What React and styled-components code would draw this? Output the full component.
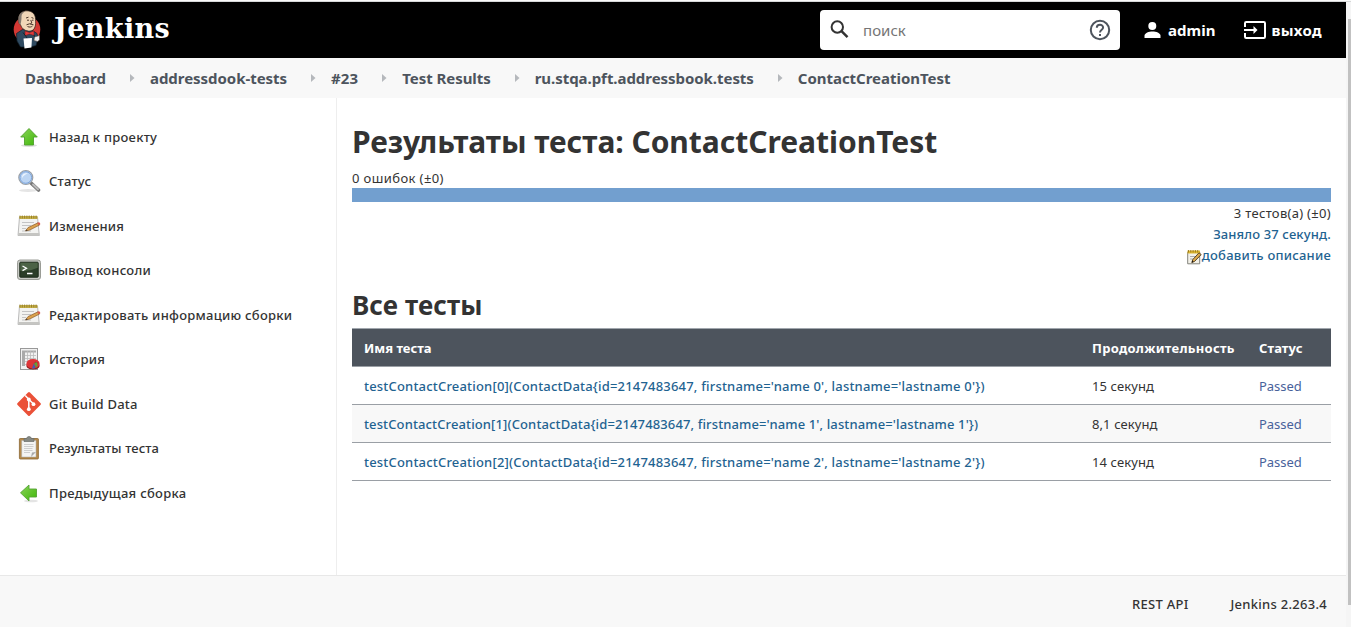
import React from 'react';
import styled, { createGlobalStyle } from 'styled-components';

const GlobalStyle = createGlobalStyle`
  * { box-sizing: border-box; }
  body { margin: 0; background: #fff; overflow: hidden; }
  h1, h2 { margin: 0; }
`;

const Window = styled.div`
  display: flex;
  flex-direction: column;
  height: 627px;
  width: 1351px;
  border-top: 1px solid #fafafa;
  font-family: "Noto Sans", "Open Sans", sans-serif;
  font-size: 13px;
  color: #333;
  white-space: nowrap;
`;
const Viewport = styled.div`
  display: flex;
  flex: 1;
  min-height: 0;
  border-top: 1px solid #d5d7d8;
`;
const Page = styled.div`
  display: flex;
  flex-direction: column;
  width: 1346px;
`;
const ScrollTrack = styled.div`
  width: 5px;
  padding: 17px 0 20px 2px;
  background: #f5f5f5;
`;
const ScrollThumb = styled.div`
  height: 586px;
  background: #c1c1c1;
`;

const Header = styled.header`
  display: flex;
  align-items: center;
  height: 56px;
  padding: 0 24px 0 12px;
  background: #000;
  color: #fff;
`;
const Brand = styled.a`
  display: flex;
  align-items: center;
  gap: 12px;
  flex: 1;
`;
const BrandName = styled.span`
  font: 700 27px/36px "DejaVu Serif", serif;
  letter-spacing: 0.4px;
  margin-top: -3px;
`;
const SearchBox = styled.div`
  display: flex;
  align-items: center;
  width: 300px;
  height: 40px;
  padding: 0 9px;
  border-radius: 4px;
  background: #fff;
  color: #333;
`;
const Placeholder = styled.span`
  flex: 1;
  margin-left: 12px;
  font-size: 15px;
  color: #757575;
`;
const UserLink = styled.a`
  display: flex;
  align-items: center;
  gap: ${(p) => p.$gap}px;
  margin-left: ${(p) => p.$left}px;
  font-size: 15px;
  font-weight: 700;
  letter-spacing: ${(p) => p.$ls || 0}px;
`;

const Breadcrumbs = styled.nav`
  display: flex;
  align-items: center;
  height: 40px;
  padding-left: 25px;
  background: #f8f8f8;
  color: #4d545d;
`;
const Crumb = styled.a`
  font-size: 15px;
  font-weight: 700;
  letter-spacing: ${(p) => p.$ls || 0}px;
`;
const Separator = styled.span`
  display: flex;
  width: 44px;
  padding-left: 24px;
`;

const Body = styled.div`
  display: flex;
  height: 477px;
`;
const Sidebar = styled.aside`
  width: 337px;
  padding: 16.6px 0 0 17px;
  border-right: 1px solid #eee;
`;
const Task = styled.a`
  display: flex;
  align-items: center;
  gap: 8px;
  height: 44.5px;
  font-weight: 500;
  letter-spacing: ${(p) => p.$ls || 0}px;
`;

const Main = styled.main`
  flex: 1;
  padding: 24px 15px 0 15px;
`;
const Title = styled.h1`
  font-size: 30px;
  line-height: 40px;
  letter-spacing: -0.03px;
  margin-bottom: 6px;
`;
const Failures = styled.div`
  line-height: 20px;
  letter-spacing: 0.4px;
`;
const ResultBar = styled.div`
  height: 14px;
  background: #729fcf;
`;
const Summary = styled.div`
  display: flex;
  flex-direction: column;
  align-items: flex-end;
  padding-top: 1px;
  line-height: 21px;
`;
const Count = styled.span`
  letter-spacing: 0.3px;
`;
const Link = styled.a`
  display: flex;
  align-items: center;
  color: #1f6391;
  font-weight: 500;
  letter-spacing: ${(p) => p.$ls || 0}px;
`;
const Subtitle = styled.h2`
  margin: 21px 0 5px;
  font-size: 26px;
  line-height: 36px;
  letter-spacing: 0.1px;
`;
const Table = styled.div`
  border-top: 1px solid #a0a6ad;
`;
const Row = styled.div`
  display: grid;
  grid-template-columns: 728px 167px 1fr;
  align-items: center;
  height: 38px;
  padding-left: 12px;
  border-bottom: 1px solid #9a9fa5;
  background: ${(p) => (p.$striped ? '#f8f8f8' : '#fff')};
`;
const HeadRow = styled(Row)`
  background: #4d545d;
  color: #fff;
  font-weight: 700;
`;
const Cell = styled.span`
  letter-spacing: ${(p) => p.$ls || 0}px;
`;
const Status = styled.a`
  color: #48629b;
  letter-spacing: -0.05px;
`;

const Footer = styled.footer`
  display: flex;
  justify-content: flex-end;
  align-items: center;
  gap: 42px;
  flex: 1;
  padding: 5px 19px 0 0;
  border-top: 1px solid #e8e8e8;
  background: #f8f8f8;
  font-weight: 500;
  letter-spacing: 0.28px;
`;

const Butler = () => (
  <svg width="30" height="40" viewBox="0 0 30 40">
    <circle cx="15" cy="19.500" r="13.300" fill="#d33833" />
    <path d="M4.500 23.500l6-4 10 1 4.500 3 1 5-2 7-6 1.500H8.500L5 31z" fill="#2f4a60" stroke="#10202c" strokeWidth=".7" />
    <path d="M6.500 9C6.500 3 11 .8 15 .8c5.500.2 8.500 3.500 8.500 8.500 0 3 .5 5-.5 7.500-1 3.500-3.500 4.500-6.500 4.300-4-.3-7-2.800-8-6.300C7 13.500 6.500 12 6.500 9z" fill="#f0d6b7" stroke="#2a1d16" strokeWidth=".7" />
    <path d="M6.500 8.500c0-4 3-7 7-7.300-2 1-4 2.500-4 5 0 2 0 4-.5 6l-.5 2.500c-2-1-2.300-3.500-2-6.200z" fill="#81776e" />
    <path d="M14 8l2.500-.8M19.500 7.500l2 .8M15 10.200h2M20 10.200h1.500M18.800 10l1 3-1.500.8M15.500 16.500c2 1 4 .5 5-.5M14.500 14.800l3-1 4 1" fill="none" stroke="#3b271d" strokeWidth=".9" />
    <path d="M13 21l4.500 1.500 4.500-1.500v4.500l-4.500-1.500-4.500 1.700z" fill="#e23b3b" stroke="#6f1515" strokeWidth=".5" />
    <path d="M11 22.500l3 4 1.500 2.500M22 25l1 4" fill="none" stroke="#14242f" />
    <path d="M11.500 28.500l8.500-.6-.6 9.500-6.900 1z" fill="#fff" />
    <path d="M22.500 27l5-1.500v4.500l-2 1.500-3.500-1z" fill="#eee" stroke="#5b4a42" strokeWidth=".6" />
  </svg>
);
const SearchIcon = () => (
  <svg width="22" height="22" viewBox="0 0 22 22" fill="none" stroke="#333" strokeWidth="2">
    <circle cx="8.300" cy="8" r="5.700" />
    <path d="M12.500 12.200l6 6" strokeWidth="2.400" />
  </svg>
);
const HelpIcon = () => (
  <svg width="22" height="22" viewBox="0 0 22 22" fill="none" stroke="#4d545d" strokeWidth="2">
    <circle cx="11" cy="11" r="9.200" />
    <path d="M7.800 8.800c0-4 6.300-4 6.300-.3 0 2.200-3.100 2.300-3.100 5" />
    <path d="M11 15v2" />
  </svg>
);
const UserIcon = () => (
  <svg width="17" height="18" viewBox="0 0 17 18" fill="#fff">
    <circle cx="8.300" cy="5" r="4" />
    <path d="M.5 17v-2.200c0-2.800 4.500-4.300 8-4.300s8 1.500 8 4.300V17z" />
  </svg>
);
const LogoutIcon = () => (
  <svg width="22" height="20" viewBox="0 0 22 20" fill="none" stroke="#fff" strokeWidth="2">
    <path d="M1 7V3.200Q1 2 2.200 2H19.800Q21 2 21 3.200V16.800Q21 18 19.800 18H2.200Q1 18 1 16.800V13" />
    <path d="M0 10h10" />
    <path d="M9.500 6l4 4-4 4z" fill="#fff" stroke="none" />
  </svg>
);
const ArrowSep = () => (
  <svg width="5" height="8" viewBox="0 0 5 8">
    <path d="M0 0l4.500 4L0 8z" fill="#b5b8bc" />
  </svg>
);

const Glyph = ({ children }) => (
  <svg width="24" height="24" viewBox="0 0 24 24">{children}</svg>
);
const Greens = ({ id }) => (
  <defs>
    <linearGradient id={id} x1="0" y1="0" x2="1" y2="1">
      <stop offset="0" stopColor="#8bd35a" />
      <stop offset="1" stopColor="#3fb808" />
    </linearGradient>
  </defs>
);
const UpIcon = () => (
  <Glyph>
    <Greens id="up" />
    <ellipse cx="12" cy="20.500" rx="8" ry="1.500" fill="#ddd" />
    <path d="M12 3.500L20.300 12H16.500v8h-9v-8H3.700z" fill="url(#up)" stroke="#4fa02c" strokeWidth=".9" />
  </Glyph>
);
const BackIcon = () => (
  <Glyph>
    <Greens id="back" />
    <ellipse cx="14" cy="20" rx="7" ry="1.300" fill="#e4e4e4" />
    <path d="M3.500 11.800L12 4v4h7.500v8H12v4z" fill="url(#back)" stroke="#57a336" strokeWidth=".9" />
  </Glyph>
);
const MagnifierIcon = () => (
  <Glyph>
    <ellipse cx="11" cy="21.500" rx="9" ry="1.500" fill="#e5e5e5" />
    <path d="M14 14l7.500 7" stroke="#777" strokeWidth="3.600" strokeLinecap="round" />
    <path d="M16 15.500l5 4.800" stroke="#bbb" strokeWidth="2" strokeLinecap="round" />
    <circle cx="8.800" cy="8.500" r="7" fill="#bcd5f3" stroke="#9ba0a5" strokeWidth="1.200" />
    <circle cx="8.800" cy="8.500" r="5.800" fill="none" stroke="#7ba4dc" strokeWidth="1" />
    <path d="M5 8c0-3 3-4.500 6-3.500C9 5 6.500 6.500 5 9z" fill="#edf5ff" />
  </Glyph>
);
const NotepadIcon = () => (
  <Glyph>
    <path d="M2.500 3h18l1.800 18.500H1z" fill="#f3f3f1" stroke="#aaa" strokeWidth=".8" />
    <path d="M1.200 19h21v2.800h-21z" fill="#c5c5c2" />
    <path d="M2.500 2h18v3h-18z" fill="#c7b24a" />
    <path d="M3 1.500v3M5.300 1.500v3M7.600 1.500v3M9.900 1.500v3M12.200 1.500v3M14.500 1.500v3M16.800 1.500v3M19.100 1.500v3" stroke="#8b7424" strokeWidth=".8" />
    <path d="M5 8.500h12M5 11.500h9M5 14.500h4M5 17h9" stroke="#c4c4c4" />
    <path d="M8.500 17l2.500-3.400L21 8.800l1.600 2.200-9.800 5z" fill="#daa14c" stroke="#8b5b2b" strokeWidth=".7" />
    <path d="M20.200 9l1.400-.8q1.700.2 1.700 2l-1.500 1z" fill="#d75a4a" />
    <path d="M8.500 17l1-1.500 1.100.9z" fill="#333" />
  </Glyph>
);
const TerminalIcon = () => (
  <Glyph>
    <rect x=".5" y="2" width="23" height="19.500" rx="2.500" fill="#c8cac5" stroke="#9a9c96" />
    <rect x="2.800" y="4.200" width="18.400" height="15" rx=".8" fill="#2b3d28" stroke="#1c2b1a" />
    <path d="M3.300 4.700h17.400v5q-8 4-17.400 3z" fill="#4c6346" />
    <path d="M5.500 8l4 2.300-4 2.300M10 15.500h5.500" fill="none" stroke="#fff" strokeWidth="1.300" />
  </Glyph>
);
const ReportIcon = () => (
  <Glyph>
    <rect x="3.500" y="1.500" width="17" height="21" fill="#f1f1f1" stroke="#999" />
    <path d="M5 4h3v15H5zM5 3.500h14v2H5z" fill="#aaa" />
    <path d="M8 8.500h11M8 11.500h11M8 14.500h11M8 17.500h5M10.500 4v15M13.500 4v12M16.500 4v12" stroke="#bbb" strokeWidth=".8" />
    <path d="M9.500 17.500v1.500c0 4.500 13 4.500 13 0v-1.500z" fill="#8d1719" />
    <ellipse cx="16" cy="16.800" rx="6.600" ry="4.900" fill="#de3437" />
    <path d="M16.500 17l2-2.500 3 1.500z" fill="#a9252c" />
    <path d="M17 16.500l2.500-1.500q2 3 0 5.500z" fill="#5fa33a" />
    <path d="M16.800 16.500l1.700 4.600q-2 .6-3.500.3z" fill="#3d62b3" />
  </Glyph>
);
const GitIcon = () => (
  <Glyph>
    <path d="M11 .6q1-1 2 0L23.400 11q1 1 0 2L13 23.400q-1 1-2 0L.6 13q-1-1 0-2z" fill="#ea5138" />
    <path d="M8.200 3.500l3.600 3.700V17M12 7.500l4.500 4.500" fill="none" stroke="#fff" strokeWidth="1.500" />
    <circle cx="11.800" cy="7.500" r="1.900" fill="#fff" />
    <circle cx="11.800" cy="17.200" r="1.900" fill="#fff" />
    <circle cx="16.500" cy="12.200" r="1.900" fill="#fff" />
  </Glyph>
);
const ClipboardIcon = () => (
  <Glyph>
    <rect x="2.400" y="2.500" width="19" height="20.500" rx=".8" fill="#b58a4d" stroke="#8a6631" strokeWidth=".8" />
    <path d="M4.700 4.500H19v16.500H4.700z" fill="#f4f4f3" stroke="#aaa" strokeWidth=".5" />
    <path d="M7 8.500h9.500M7 10.500h9.500M7 12.500h8.500M7 14.500h8.500M7 16.500h6" stroke="#cacaca" strokeWidth=".9" />
    <path d="M14 21l1-4.500 4-.5z" fill="#aaa" />
    <path d="M7 2.500h2.500Q10 .5 12 .5t2.500 2H17v3H7z" fill="#858883" stroke="#6a6d68" strokeWidth=".7" />
  </Glyph>
);
const EditIcon = () => (
  <svg width="15" height="16" viewBox="0 0 15 16">
    <path d="M.7 3h12v11.800H.7z" fill="#f3f1e9" stroke="#77776f" strokeWidth=".9" />
    <path d="M.5 1.500h12.500v3H.5z" fill="#dfb932" />
    <path d="M1.500 1v2.500M3.800 1v2.500M6.100 1v2.500M8.400 1v2.500M10.700 1v2.500" stroke="#8d6b13" strokeWidth=".8" />
    <path d="M3 7.500h6M3 10h3" stroke="#aaa" />
    <path d="M4.800 13.500l1-3L12 3.800l2.200 1.800L7.500 12.500z" fill="#dba84b" stroke="#49381c" strokeWidth=".9" />
    <path d="M4.800 13.500l.6-1.900 1.200 1.200z" fill="#111" />
  </svg>
);
const EditIconSlot = styled.span`
  display: flex;
  padding-top: 2px;
`;

const crumbs = [
  ['Dashboard', 0],
  ['addressdook-tests', -0.04],
  ['#23', 0.1],
  ['Test Results', -0.05],
  ['ru.stqa.pft.addressbook.tests', -0.05],
  ['ContactCreationTest', -0.03],
];
const tasks = [
  [UpIcon, 'Назад к проекту', 0.25],
  [MagnifierIcon, 'Статус', 0.2],
  [NotepadIcon, 'Изменения', 0.18],
  [TerminalIcon, 'Вывод консоли', 0.27],
  [NotepadIcon, 'Редактировать информацию сборки', 0.26],
  [ReportIcon, 'История', 0.25],
  [GitIcon, 'Git Build Data', 0.2],
  [ClipboardIcon, 'Результаты теста', 0.09],
  [BackIcon, 'Предыдущая сборка', 0.27],
];
const tests = [
  ['15 секунд', 0.19],
  ['8,1 секунд', 0.12],
  ['14 секунд', 0.19],
];

export default function App() {
  return (
    <Window>
      <GlobalStyle />
      <Viewport>
        <Page>
          <Header>
            <Brand>
              <Butler />
              <BrandName>Jenkins</BrandName>
            </Brand>
            <SearchBox>
              <SearchIcon />
              <Placeholder>поиск</Placeholder>
              <HelpIcon />
            </SearchBox>
            <UserLink $left={24} $gap={7}>
              <UserIcon />
              admin
            </UserLink>
            <UserLink $left={29} $gap={5} $ls={0.35}>
              <LogoutIcon />
              выход
            </UserLink>
          </Header>
          <Breadcrumbs>
            {crumbs.map(([name, ls], i) => (
              <React.Fragment key={name}>
                {i > 0 && (
                  <Separator>
                    <ArrowSep />
                  </Separator>
                )}
                <Crumb $ls={ls}>{name}</Crumb>
              </React.Fragment>
            ))}
          </Breadcrumbs>
          <Body>
            <Sidebar>
              {tasks.map(([Icon, name, ls]) => (
                <Task key={name} $ls={ls}>
                  <Icon />
                  {name}
                </Task>
              ))}
            </Sidebar>
            <Main>
              <Title>Результаты теста: ContactCreationTest</Title>
              <Failures>0 ошибок (±0)</Failures>
              <ResultBar />
              <Summary>
                <Count>3 тестов(а) (±0)</Count>
                <Link $ls={0.13}>Заняло 37 секунд.</Link>
                <Link $ls={0.22}>
                  <EditIconSlot>
                    <EditIcon />
                  </EditIconSlot>
                  добавить описание
                </Link>
              </Summary>
              <Subtitle>Все тесты</Subtitle>
              <Table>
                <HeadRow>
                  <Cell>Имя теста</Cell>
                  <Cell $ls={0.28}>Продолжительность</Cell>
                  <Cell $ls={0.1}>Статус</Cell>
                </HeadRow>
                {tests.map(([duration, ls], i) => (
                  <Row key={duration} $striped={i === 1}>
                    <Link $ls={ls}>
                      {`testContactCreation[${i}](ContactData{id=2147483647, firstname='name ${i}', lastname='lastname ${i}'})`}
                    </Link>
                    <Cell $ls={0.1}>{duration}</Cell>
                    <Status>Passed</Status>
                  </Row>
                ))}
              </Table>
            </Main>
          </Body>
          <Footer>
            <span>REST API</span>
            <span>Jenkins 2.263.4</span>
          </Footer>
        </Page>
        <ScrollTrack>
          <ScrollThumb />
        </ScrollTrack>
      </Viewport>
    </Window>
  );
}
